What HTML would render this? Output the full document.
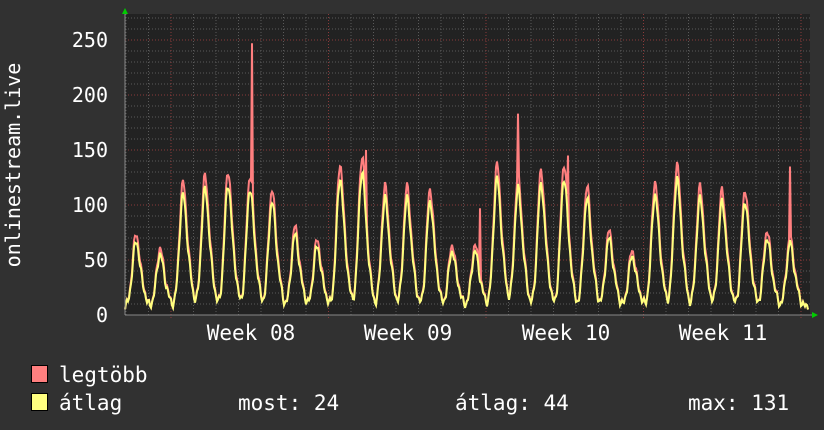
<!DOCTYPE html><html><head><style>
body{margin:0;background:#313131;width:824px;height:430px;overflow:hidden;font-family:"DejaVu Sans Mono","Liberation Mono",monospace;color:#fff}
svg{position:absolute;left:0;top:0}
</style></head><body>
<svg id="s" width="824" height="430" xmlns="http://www.w3.org/2000/svg" font-family="DejaVu Sans Mono, Liberation Mono, monospace" fill="#fff">
<rect x="125" y="14" width="685" height="301" fill="#222"/>
<g id="grid"></g>
<g id="data"></g>
<line x1="125" y1="315" x2="812" y2="315" stroke="#888" stroke-width="1"/>
<line x1="125" y1="12" x2="125" y2="315" stroke="#888" stroke-width="1"/>
<polygon points="122,14 128,14 125,8" fill="#0c0"/>
<polygon points="812,312 812,318 818,315" fill="#0c0"/>
<g font-size="20" text-anchor="end">
<text x="108" y="322">0</text><text x="108" y="267">50</text><text x="108" y="212">100</text><text x="108" y="157">150</text><text x="108" y="102">200</text><text x="108" y="47">250</text>
</g>
<text font-size="20" transform="translate(20,165) rotate(-90)" text-anchor="middle">onlinestream.live</text>
<g font-size="21" text-anchor="middle">
<text x="251" y="340">Week 08</text><text x="408" y="340">Week 09</text><text x="566" y="340">Week 10</text><text x="723" y="340">Week 11</text>
</g>
<rect x="31.5" y="365.5" width="16" height="17" fill="#ff7f7f" stroke="#000"/>
<rect x="31.5" y="393.5" width="16" height="17" fill="#ffff7f" stroke="#000"/>
<g font-size="21">
<text x="59" y="382">legtöbb</text>
<text x="59" y="410">átlag</text>
<text x="238" y="410">most: 24</text>
<text x="455" y="410">átlag: 44</text>
<text x="688" y="410">max: 131</text>
</g>
</svg>
<script>
var g=document.getElementById('grid'),d=document.getElementById('data'),h='';
for(var v=10;v<=270;v+=10){var y=315-v*1.1;if(y<14)break;var maj=v%50==0;
h+='<line x1="125" x2="810" y1="'+y+'" y2="'+y+'" stroke="'+(maj?'#8a3a3a':'#5a5a5a')+'" stroke-dasharray="1,2"/>';}
for(var x=126;x<810;x+=22.5){h+='<line y1="14" y2="315" x1="'+x+'" x2="'+x+'" stroke="#5a5a5a" stroke-dasharray="1,2"/>';}
for(var x=171;x<810;x+=157.5){h+='<line y1="14" y2="318" x1="'+x+'" x2="'+x+'" stroke="#8a3a3a" stroke-dasharray="1,2"/>';}
g.innerHTML=h;
var pk=[65,52,112,118,122,118,105,72,60,128,135,108,108,105,55,55,128,118,122,128,108,68,50,112,128,108,105,105,68,62];
var cx=[136,160,183,205,228,250,272,295,317,340,362,385,407,430,452,475,497,518,541,564,587,609,632,655,677,700,722,745,767,790];
var spikes={252:247,518:183,480:97,790:135,366:150,568:145};
function val(x,a){var v=8;for(var i=0;i<cx.length;i++){var dx=(x-cx[i])/5;v+=pk[i]*a*Math.exp(-dx*dx)+pk[i]*a*0.2*Math.exp(-Math.pow((x-cx[i]-7)/4,2));}
v+=2.5*Math.sin(x*1.7)+2*Math.sin(x*0.9);return Math.max(v,5);}
var r='',yv='';
for(var x=125;x<=808;x++){var a=val(x,1);if(spikes[x])a=spikes[x];r+=x+','+(315-a*1.1).toFixed(1)+' ';
var b=val(x,0.9);if(x==790)b=68;yv+=x+','+(315-b*1.1).toFixed(1)+' ';}
d.innerHTML='<polyline points="'+r+'" fill="none" stroke="#ff7f7f" stroke-width="2"/><polyline points="'+yv+'" fill="none" stroke="#ffff7f" stroke-width="2"/>';
</script>
</body></html>
